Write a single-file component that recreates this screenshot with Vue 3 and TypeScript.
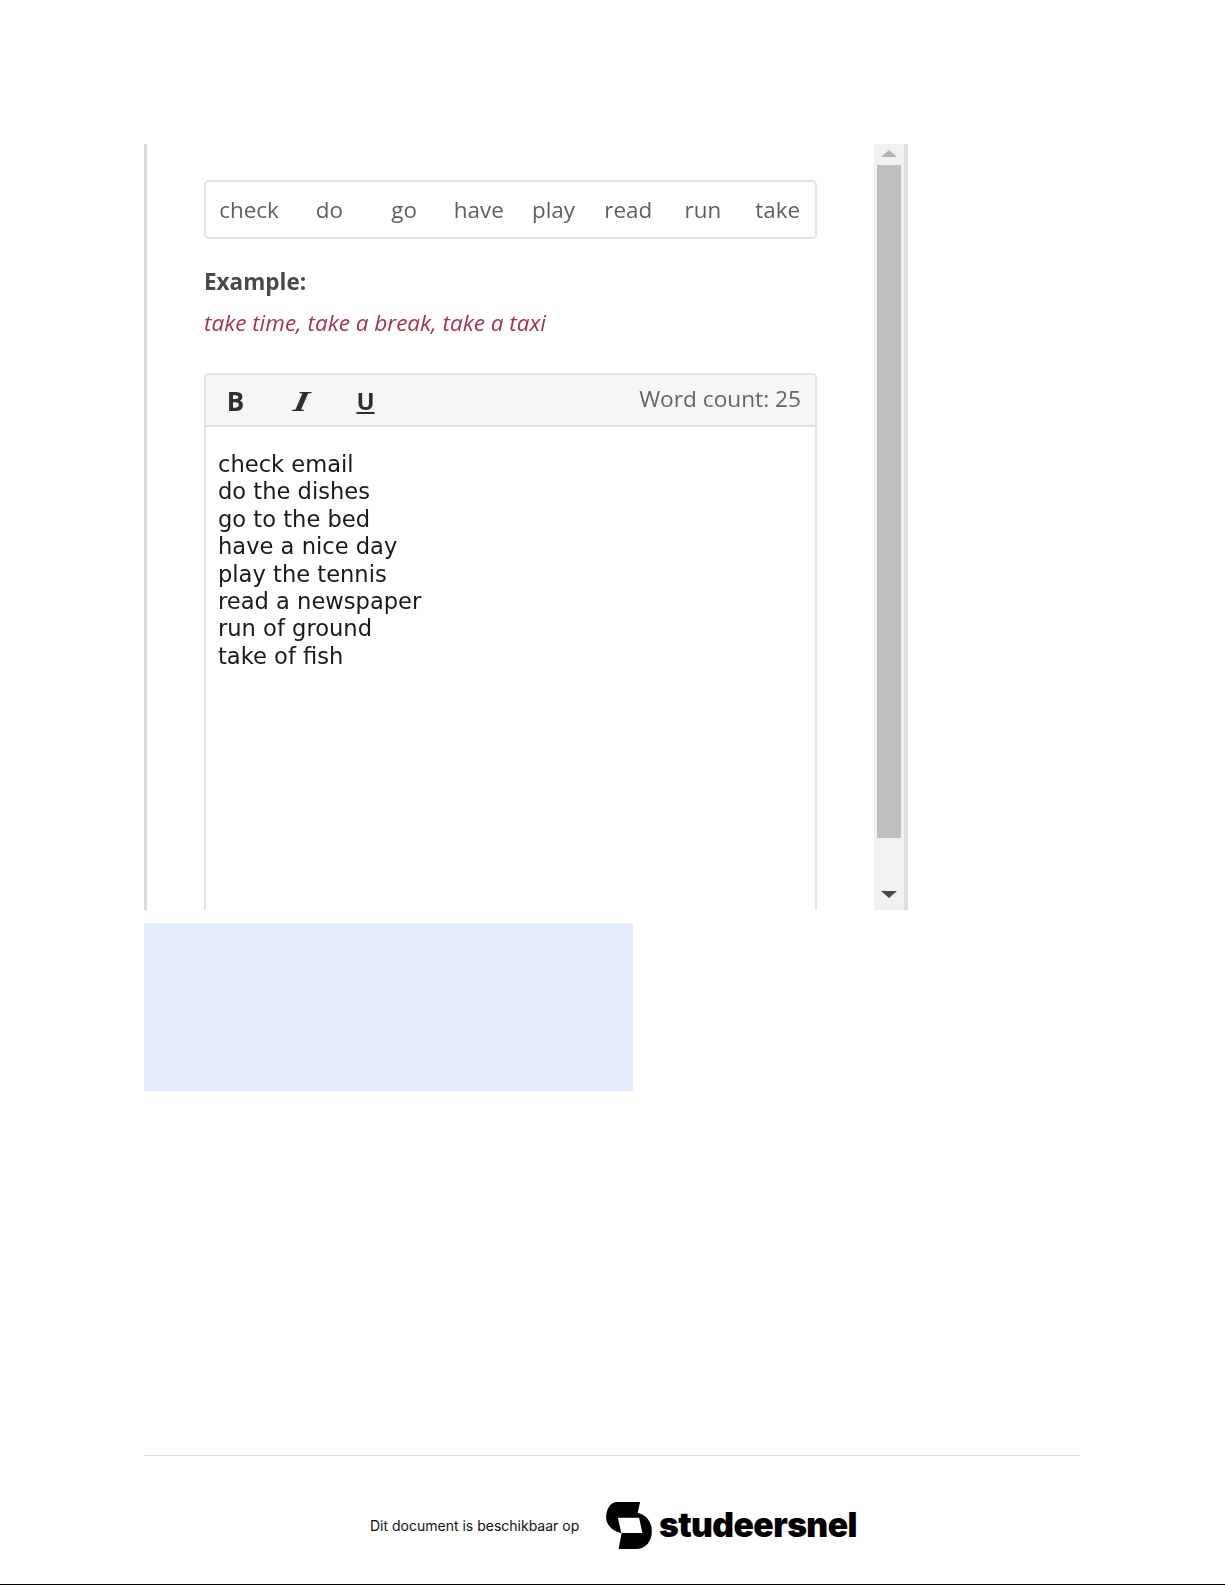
<script setup lang="ts">
const words: string[] = ['check', 'do', 'go', 'have', 'play', 'read', 'run', 'take']
const lines: string[] = [
  'check email',
  'do the dishes',
  'go to the bed',
  'have a nice day',
  'play the tennis',
  'read a newspaper',
  'run of ground',
  'take of fish',
]
</script>

<template>
  <div class="page">
    <div class="shot">
      <div class="content">
        <div class="wordbox">
          <span v-for="w in words" :key="w" class="word">{{ w }}</span>
        </div>
        <div class="example-label">Example:</div>
        <div class="example">take time, take a break, take a taxi</div>
        <div class="editor">
          <div class="toolbar">
            <div class="tools">
              <span class="tool b">B</span>
              <span class="tool i">I</span>
              <span class="tool u">U</span>
            </div>
            <span class="count">Word count: 25</span>
          </div>
          <div class="body">
            <div v-for="l in lines" :key="l">{{ l }}</div>
          </div>
        </div>
      </div>
      <div class="scrollbar">
        <div class="arrow up"></div>
        <div class="thumb"></div>
        <div class="arrow down"></div>
      </div>
    </div>
    <div class="blue"></div>
    <div class="spacer"></div>
    <div class="rule"></div>
    <div class="footer">
      <span class="avail">Dit document is beschikbaar op</span>
      <svg class="logo" viewBox="47 38 136 140" width="46" height="47" aria-hidden="true">
        <path
          fill-rule="evenodd"
          d="M80 38H148L141 70C170 78 183 100 183 125C183 155 165 178 135 178H84L93 131C65 125 47 105 47 85C47 58 60 38 80 38ZM82 85H145L155 130H92Z"
          fill="#000"
        />
      </svg>
      <span class="brand">studeersnel</span>
    </div>
    <div class="edge"></div>
  </div>
</template>

<style>
html, body { margin: 0; background: #fff; }
</style>

<style scoped>
.page {
  width: 1225px;
  height: 1585px;
  box-sizing: border-box;
  padding-top: 144px;
  display: flex;
  flex-direction: column;
  background: #fff;
  overflow: hidden;
}
.shot {
  margin-left: 144px;
  width: 764px;
  height: 766px;
  flex: none;
  box-sizing: border-box;
  border-left: 3px solid #dcdcdc;
  border-right: 4px solid #dedede;
  display: flex;
  justify-content: space-between;
  overflow: hidden;
  font-family: "Open Sans", sans-serif;
  filter: blur(0.4px);
}
.content {
  margin-left: 57px;
  padding-top: 36px;
  width: 613px;
  flex: none;
}
.wordbox {
  height: 59px;
  box-sizing: border-box;
  border: 2px solid #e2e2e2;
  border-radius: 5px;
  display: grid;
  grid-template-columns: 86px repeat(7, 1fr);
  align-items: center;
  color: #5f5f5f;
  font-size: 22.4px;
}
.word { text-align: center; }
.example-label {
  margin-top: 28px;
  font-size: 22.5px;
  line-height: 30px;
  font-weight: 700;
  color: #4a4a4a;
}
.example {
  margin-top: 10px;
  font-size: 22.5px;
  line-height: 32px;
  font-style: italic;
  color: #a8324a;
}
.editor {
  margin-top: 34px;
  height: 560px;
  box-sizing: border-box;
  border: 2px solid #e4e4e4;
  border-bottom: 0;
  border-radius: 5px 5px 0 0;
}
.toolbar {
  height: 52px;
  box-sizing: border-box;
  background: #f6f6f6;
  border-bottom: 2px solid #e0e0e0;
  display: flex;
  align-items: center;
  justify-content: space-between;
  padding: 0 14px 4px 20px;
}
.tools {
  display: flex;
  align-items: center;
  gap: 47px;
  padding-top: 6px;
}
.tool { color: #2f2f33; font-size: 26px; line-height: 30px; width: 19px; text-align: center; }
.b { font-weight: 700; }
.i {
  display: inline-block;
  font-family: "Liberation Serif", serif;
  font-style: italic;
  font-weight: 700;
  font-size: 29px;
  transform: scaleX(1.35) skewX(-8deg);
}
.u {
  margin-left: -2px;
  font-size: 24px;
  font-weight: 700;
  text-decoration: underline;
  text-decoration-thickness: 2px;
  text-underline-offset: 2px;
}
.count { color: #666; font-size: 22.7px; }
.body {
  padding: 24px 0 0 12px;
  font-family: "DejaVu Sans", sans-serif;
  font-size: 22.6px;
  line-height: 27.4px;
  color: #1a1a1a;
}
.scrollbar {
  width: 30px;
  flex: none;
  background: #f1f1f1;
  display: flex;
  flex-direction: column;
  align-items: center;
}
.arrow { width: 0; height: 0; border-left: 8px solid transparent; border-right: 8px solid transparent; }
.up { margin-top: 6px; border-bottom: 7px solid #b4b4b4; margin-bottom: 8px; }
.thumb { width: 24px; height: 673px; background: #bfbfbf; flex: none; }
.down { margin-top: 53px; border-top: 7px solid #4a4a4a; }
.blue {
  margin: 13px 0 0 144px;
  width: 489px;
  height: 168px;
  background: #e4edfd;
  flex: none;
}
.spacer { height: 364px; flex: none; }
.rule {
  margin-left: 144px;
  width: 936px;
  height: 1px;
  background: #dcdcdc;
  flex: none;
}
.footer {
  margin-top: 45px;
  padding-left: 370px;
  height: 48px;
  display: flex;
  align-items: center;
  flex: none;
}
.avail {
  width: 236px;
  flex: none;
  font-family: Inter, sans-serif;
  font-size: 14px;
  color: #111;
  letter-spacing: 0;
}
.logo { flex: none; }
.brand {
  margin-left: 7px;
  font-family: Inter, sans-serif;
  font-weight: 900;
  font-size: 33.7px;
  letter-spacing: -0.6px;
  color: #000;
  line-height: 48px;
}
.edge {
  margin-top: 35px;
  height: 1px;
  background: #000;
  flex: none;
}
</style>
